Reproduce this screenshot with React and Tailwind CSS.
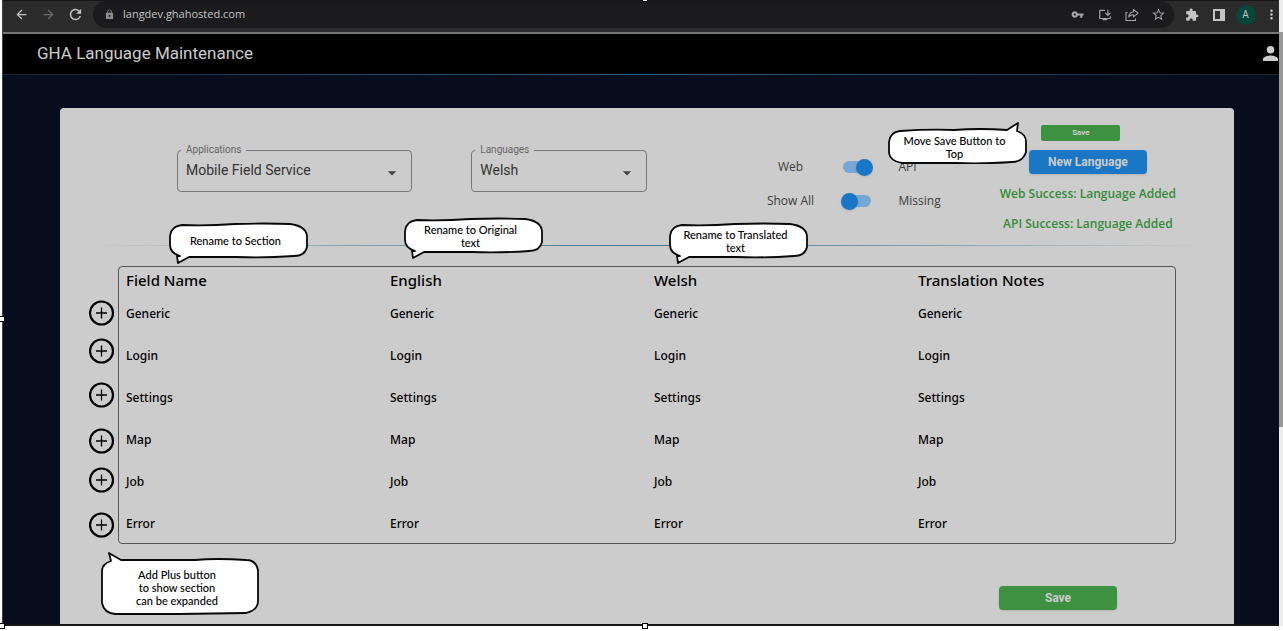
import React from "react";
import {
  MdArrowBack, MdArrowForward, MdRefresh, MdLock, MdVpnKey, MdOutlineInstallDesktop,
  MdStarBorder, MdExtension, MdMoreVert, MdArrowDropDown,
} from "react-icons/md";

const sections = ["Generic", "Login", "Settings", "Map", "Job", "Error"];
const columns = ["Field Name", "English", "Welsh", "Translation Notes"];
const plusPositions = ["top-[192px]", "top-[230px]", "top-[274px]", "top-[320px]", "top-[359px]", "top-[404px]"];

function BrowserBar() {
  const icon = "flex w-[27px] items-center justify-center";
  return (
    <div className="flex h-8 items-center border-t border-[#151517] bg-[#2b2b2c] pb-1 text-[#c4c4c4]">
      <div className="flex items-center pl-[5px]">
        <button aria-label="Back" className={icon}><MdArrowBack size={15} /></button>
        <button aria-label="Forward" className={`${icon} text-[#6b6b6b]`}><MdArrowForward size={15} /></button>
        <button aria-label="Reload" className={icon}><MdRefresh size={17} /></button>
      </div>
      <div className="ml-1 flex h-[27px] flex-1 items-center rounded-full bg-[#1b1b1e] pr-0.5 pl-[11px]">
        <MdLock size={11} className="text-[#8b8b8b]" />
        <input aria-label="Address" defaultValue="langdev.ghahosted.com" className="ml-2 flex-1 bg-transparent font-['Open_Sans',sans-serif] text-[11px] outline-none" />
        <div className="flex items-center text-[#a5a5a5]">
          <button aria-label="Passwords" className={icon}><MdVpnKey size={13} /></button>
          <button aria-label="Install" className={icon}><MdOutlineInstallDesktop size={14} /></button>
          <button aria-label="Share" className={icon}>
            <svg width="14" height="14" viewBox="0 0 14 14" fill="none" stroke="currentColor" strokeWidth="1.1" strokeLinejoin="round">
              <path d="M2.5 4.5h-1.5v8h9.500v-2" />
              <path d="M8.500 1.500l4.500 3.700-4.500 3.700v-2.200c-2.200 0-3.700.6-4.800 2.200.3-2.800 1.800-4.800 4.800-5.200z" />
            </svg>
          </button>
          <button aria-label="Bookmark" className={icon}><MdStarBorder size={15} /></button>
        </div>
      </div>
      <div className="ml-1 flex items-center">
        <button aria-label="Extensions" className={icon}><MdExtension size={14} /></button>
        <button aria-label="Side panel" className={icon}>
          <svg width="14" height="14" viewBox="0 0 14 14"><path d="M1 1h12v12H1z M3 3v8h5V3z" fill="currentColor" fillRule="evenodd" /></svg>
        </button>
        <span className={icon}>
          <button aria-label="Profile" className="flex size-5 items-center justify-center rounded-full bg-[#07463a] font-[Roboto,sans-serif] text-[10px]">A</button>
        </span>
        <button aria-label="Menu" className="flex w-5 justify-end"><MdMoreVert size={15} /></button>
      </div>
    </div>
  );
}

function SelectField({ id, label, value }) {
  return (
    <div className="relative font-[Roboto,sans-serif]">
      <label htmlFor={id} className="absolute -top-2 left-1 bg-[#cccccc] px-[5px] text-[10px] leading-4 text-[#666]">{label}</label>
      <select id={id} className="h-[42px] w-full appearance-none rounded border border-[#777] bg-transparent pb-0.5 pl-2 text-sm text-[#333]">
        <option>{value}</option>
      </select>
      <MdArrowDropDown size={20} className="pointer-events-none absolute top-[13px] right-[10px] text-[#444]" />
    </div>
  );
}

function Toggle({ left, right, on }) {
  return (
    <label className="grid h-[34px] grid-cols-[48px_80px_1fr] items-center text-xs text-[#3c3c3c]">
      <span className="text-center whitespace-nowrap">{left}</span>
      <span className="flex justify-center pl-1">
        <input type="checkbox" role="switch" defaultChecked={on} className="peer sr-only" />
        <span className="flex h-3 w-7 items-center rounded-full bg-[#75a7d5] peer-checked:justify-end">
          <span className={on ? "-mr-0.5 size-[17px] shrink-0 rounded-full bg-[#1976c5] shadow" : "-ml-0.5 size-[17px] shrink-0 rounded-full bg-[#1976c5] shadow"} />
        </span>
      </span>
      <span className="pl-1">{right}</span>
    </label>
  );
}

const bubblePaths = {
  small: "M13 3 Q38 4 66 2 Q96 1 121 2 Q137 4 138 14 L138 25 Q136 34 125 34 Q96 36 68 35 L20 35 L9 41 L8 34 L11 34 Q1 31 1 23 L1 14 Q2 4 13 3Z",
  save: "M12 9 Q40 7 66 8 Q92 6 119 8 L130 1 L129 9 Q138 12 138 20 L138 30 Q135 40 124 40 Q95 42 68 41 L14 41 Q2 39 1 31 L1 20 Q2 10 12 9Z",
  large: "M20 8 L8 1 L10 9 Q1 12 1 19 L1 51 Q3 61 14 62 L78 62 L145 61 Q157 58 157 49 L157 18 Q155 8 145 8 Q115 6 94 8Z",
};

function Callout({ shape, width, height, place, textClass, children }) {
  return (
    <div className={`absolute z-10 ${place}`}>
      <svg width={width} height={height} viewBox={`0 0 ${width} ${height}`} className="block">
        <path d={bubblePaths[shape]} fill="#fff" stroke="#080808" strokeWidth="1.8" strokeLinejoin="round" />
      </svg>
      <p className={`absolute inset-x-0 text-center font-[Lato,sans-serif] text-[11px] leading-[13px] font-medium text-black ${textClass}`}>{children}</p>
    </div>
  );
}

function SectionTable() {
  return (
    <div className="mx-[58px] mt-5 overflow-hidden rounded border border-[#555]">
      <table className="w-full table-fixed border-collapse text-left font-['Noto_Sans',sans-serif] text-black">
        <thead>
          <tr className="h-7">
            {columns.map((c) => <th key={c} className="p-0 pb-0.5 pl-[7px] text-[15px] leading-5 font-medium">{c}</th>)}
          </tr>
        </thead>
        <tbody>
          {sections.map((s) => (
            <tr key={s} className="h-[42px] align-top last:h-[38px]">
              {columns.map((c) => <td key={c} className="p-0 pt-[11px] pl-[7px] text-xs leading-4 font-medium">{s}</td>)}
            </tr>
          ))}
        </tbody>
      </table>
    </div>
  );
}

export default function App() {
  const handle = "absolute z-20 size-1.5 border border-black bg-white";
  return (
    <div className="relative overflow-hidden bg-white pb-[5px] font-['Open_Sans',sans-serif]">
      <div className="flex">
        <div className="w-[3px] border-r border-[#444] bg-white" />
        <div className="min-w-0 flex-1 border-b-2 border-[#151517] bg-[#070d1d]">
          <BrowserBar />
          <header className="flex h-[42px] items-center justify-between border-t-2 border-[#777] bg-black pl-[34px]">
            <h1 className="font-[Roboto,sans-serif] text-[17px] text-[#cbcbcb]">GHA Language Maintenance</h1>
            <button aria-label="Account" className="text-[#cccccc]">
              <svg width="16" height="16" viewBox="4 4 17 17"><path d="M12 12a4 4 0 1 0 0-8 4 4 0 0 0 0 8zm0 2c-2.700 0-8 1.300-8 4v2h16v-2c0-2.700-5.300-4-8-4z" fill="currentColor" /></svg>
            </button>
          </header>
          <div className="h-px bg-linear-to-r from-[#1a242e] via-[#2d6184] to-[#1a242e]" />
          <main className="relative mt-[33px] mr-[45px] ml-[57px] rounded-t bg-[#cccccc]">
            <div className="mx-[58px] grid h-[137px] grid-cols-[59fr_235fr_59fr_176fr_119fr_175fr_58fr_176fr] items-start">
              <div className="col-start-2 pt-[42px]"><SelectField id="app" label="Applications" value="Mobile Field Service" /></div>
              <div className="col-start-4 pt-[42px]"><SelectField id="lang" label="Languages" value="Welsh" /></div>
              <div className="col-start-6 pt-[42px]">
                <Toggle left="Web" right="API" on />
                <Toggle left="Show All" right="Missing" />
              </div>
              <div className="col-start-8 flex flex-col items-center pt-[17px]">
                <button className="mr-3.5 h-4 w-[79px] rounded-xs bg-[#3f9142] font-[Roboto,sans-serif] text-[8px] font-bold text-[#cccccc]">Save</button>
                <button className="mt-[9px] h-6 w-[118px] rounded-sm bg-[#1b77c5] font-[Roboto,sans-serif] text-xs font-bold text-[#cccccc] shadow-sm">New Language</button>
                <p className="mt-3 text-xs leading-4 font-semibold whitespace-nowrap text-[#358b38]">Web Success: Language Added</p>
                <p className="mt-3.5 text-xs leading-4 font-semibold whitespace-nowrap text-[#358b38]">API Success: Language Added</p>
              </div>
            </div>
            <div className="mx-5 h-px bg-linear-to-r from-transparent via-[#3f7391] to-transparent" />
            <SectionTable />
            <div className="flex justify-end pt-[42px] pr-[117px] pb-[14px]">
              <button className="h-6 w-[118px] rounded-sm bg-[#3f9142] font-[Roboto,sans-serif] text-xs font-bold text-[#cccccc] shadow-sm">Save</button>
            </div>

            {sections.map((s, i) => (
              <button key={s} aria-label={`Expand ${s}`} className={`absolute left-[29px] ${plusPositions[i]}`}>
                <svg width="26" height="26" viewBox="0 0 26 26" fill="none" stroke="#000">
                  <circle cx="12.5" cy="13" r="11.500" strokeWidth="2.200" />
                  <path d="M12.500 7.500v11M7 13h11" strokeWidth="1.300" />
                </svg>
              </button>
            ))}
            <Callout shape="small" width={139} height={42} place="left-[109px] top-[114px]" textClass="top-3 pr-1.5">Rename to Section</Callout>
            <Callout shape="small" width={139} height={42} place="left-[344px] top-[109px]" textClass="top-1.5 pr-1.5">Rename to Original<br />text</Callout>
            <Callout shape="small" width={139} height={42} place="left-[609px] top-[114px]" textClass="top-1.5 pr-1.5">Rename to Translated<br />text</Callout>
            <Callout shape="save" width={139} height={42} place="left-[828px] top-[14px]" textClass="top-3 pr-1.5">Move Save Button to<br />Top</Callout>
            <Callout shape="large" width={158} height={63} place="left-[41px] top-[444px]" textClass="top-4 pr-1.5">Add Plus button<br />to show section<br />can be expanded</Callout>
          </main>
        </div>
        <div className="flex w-1 flex-col bg-[#ededed]">
          <div className="h-8" />
          <div className="h-[395px] bg-[#999]" />
        </div>
      </div>
      <span className={`${handle} -top-1 left-1/2`} />
      <span className={`${handle} top-1/2 -left-px`} />
      <span className={`${handle} bottom-0.5 left-1/2`} />
      <span className={`${handle} bottom-0.5 -left-px`} />
    </div>
  );
}
